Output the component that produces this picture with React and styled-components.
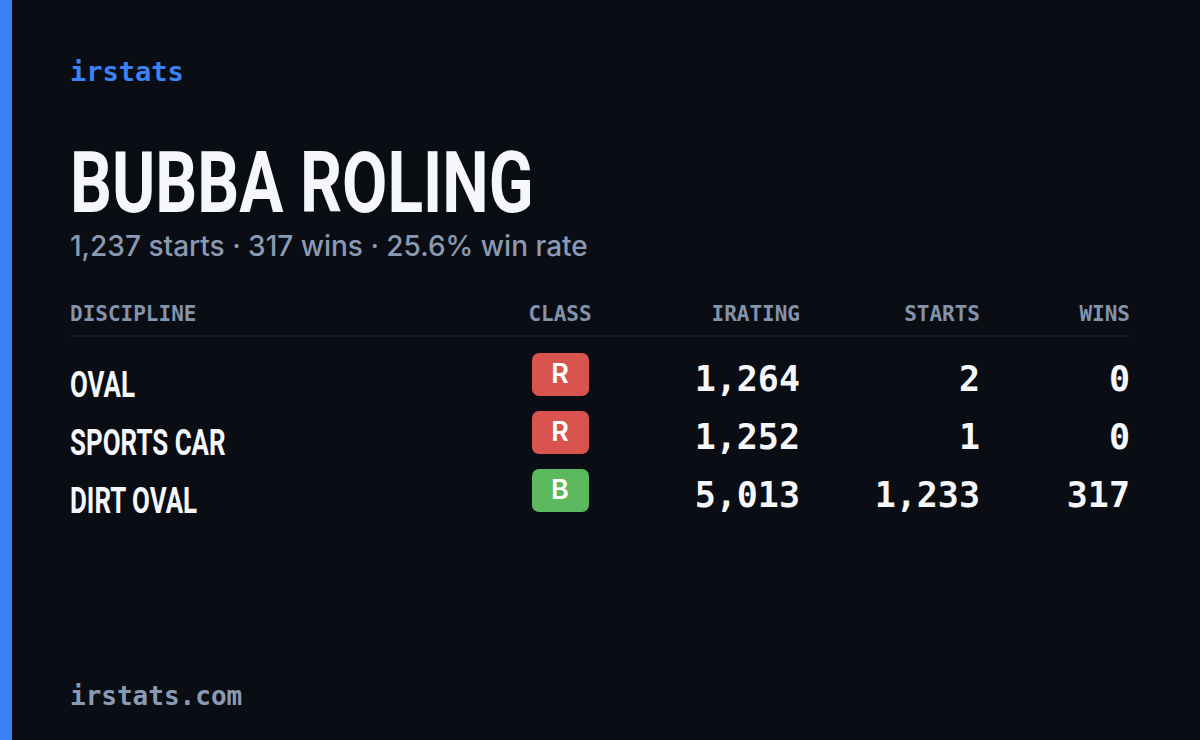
import styled, { createGlobalStyle } from "styled-components";

const GlobalStyle = createGlobalStyle`
  body {
    margin: 0;
    background: #0a0d14;
  }
`;

const mono = `"DejaVu Sans Mono", "Liberation Mono", monospace`;

const Card = styled.div`
  width: 1200px;
  height: 740px;
  display: flex;
  background: #0a0d14;
  overflow: hidden;
`;

const Accent = styled.div`
  width: 12px;
  flex-shrink: 0;
  background: #3b82f6;
`;

const Content = styled.div`
  flex: 1;
  display: flex;
  flex-direction: column;
  padding: 52px 58px 26px 58px;
`;

const Brand = styled.div`
  font-family: ${mono};
  font-weight: 700;
  font-size: 27px;
  line-height: 40px;
  color: #3b82f6;
`;

const Name = styled.h1`
  margin: 58px 0 0 0;
  font-family: Roboto, "Liberation Sans", sans-serif;
  font-weight: 700;
  font-size: 86px;
  line-height: 66px;
  color: #f5f7fa;
  display: inline-block;
  white-space: nowrap;
  transform: scaleX(0.765);
  transform-origin: left center;
`;

const Summary = styled.div`
  margin-top: 12px;
  font-family: Inter, "Noto Sans", sans-serif;
  font-weight: 500;
  font-size: 28px;
  line-height: 36px;
  color: #8b9ab3;
`;

const Table = styled.div`
  margin-top: 35px;
  display: grid;
  grid-template-columns: 430px 120px 180px 180px 150px;
`;

const Head = styled.div`
  font-family: ${mono};
  font-weight: 700;
  font-size: 21px;
  line-height: 30px;
  color: #8393ab;
  text-align: ${(p) => p.align || "left"};
  padding-bottom: 6px;
  border-bottom: 2px solid #161a24;
  margin-bottom: 14px;
`;

const Discipline = styled.div`
  height: 58px;
  display: flex;
  align-items: flex-end;
  padding-bottom: 4px;
  box-sizing: border-box;
`;

const DisciplineText = styled.span`
  font-family: Roboto, "Liberation Sans", sans-serif;
  font-weight: 700;
  font-size: 36px;
  line-height: 40px;
  color: #f5f7fa;
  white-space: nowrap;
  display: inline-block;
  transform: scaleX(0.72);
  transform-origin: left center;
`;

const ClassCell = styled.div`
  height: 58px;
  display: flex;
  justify-content: center;
  align-items: flex-start;
  padding-top: 2px;
  box-sizing: border-box;
`;

const Badge = styled.div`
  width: 57px;
  height: 43px;
  border-radius: 7px;
  background: ${(p) => p.color};
  color: #ffffff;
  display: flex;
  align-items: center;
  justify-content: center;
  font-family: Inter, "Liberation Sans", sans-serif;
  font-weight: 600;
  font-size: 27px;
  padding-bottom: 3px;
  box-sizing: border-box;
`;

const Num = styled.div`
  height: 58px;
  font-family: ${mono};
  font-weight: 700;
  font-size: 35px;
  line-height: 50px;
  padding-top: 3px;
  box-sizing: border-box;
  color: #f5f7fa;
  text-align: right;
`;

const Footer = styled.div`
  margin-top: auto;
  font-family: ${mono};
  font-weight: 700;
  font-size: 26px;
  line-height: 36px;
  color: #8b9ab3;
`;

const classColors = {
  R: "#d9534f",
  B: "#5cb85c",
};

const rows = [
  { name: "OVAL", cls: "R", irating: "1,264", starts: "2", wins: "0" },
  { name: "SPORTS CAR", cls: "R", irating: "1,252", starts: "1", wins: "0" },
  { name: "DIRT OVAL", cls: "B", irating: "5,013", starts: "1,233", wins: "317" },
];

const App = () => {
  return (
    <>
      <GlobalStyle />
      <Card>
        <Accent />
        <Content>
          <Brand>irstats</Brand>
          <div>
            <Name>BUBBA ROLING</Name>
          </div>
          <Summary>1,237 starts · 317 wins · 25.6% win rate</Summary>
          <Table>
            <Head>DISCIPLINE</Head>
            <Head align="center">CLASS</Head>
            <Head align="right">IRATING</Head>
            <Head align="right">STARTS</Head>
            <Head align="right">WINS</Head>
            {rows.map((r) => (
              <>
                <Discipline key={r.name + "n"}>
                  <DisciplineText>{r.name}</DisciplineText>
                </Discipline>
                <ClassCell key={r.name + "c"}>
                  <Badge color={classColors[r.cls]}>{r.cls}</Badge>
                </ClassCell>
                <Num key={r.name + "i"}>{r.irating}</Num>
                <Num key={r.name + "s"}>{r.starts}</Num>
                <Num key={r.name + "w"}>{r.wins}</Num>
              </>
            ))}
          </Table>
          <Footer>irstats.com</Footer>
        </Content>
      </Card>
    </>
  );
};

export default App;
